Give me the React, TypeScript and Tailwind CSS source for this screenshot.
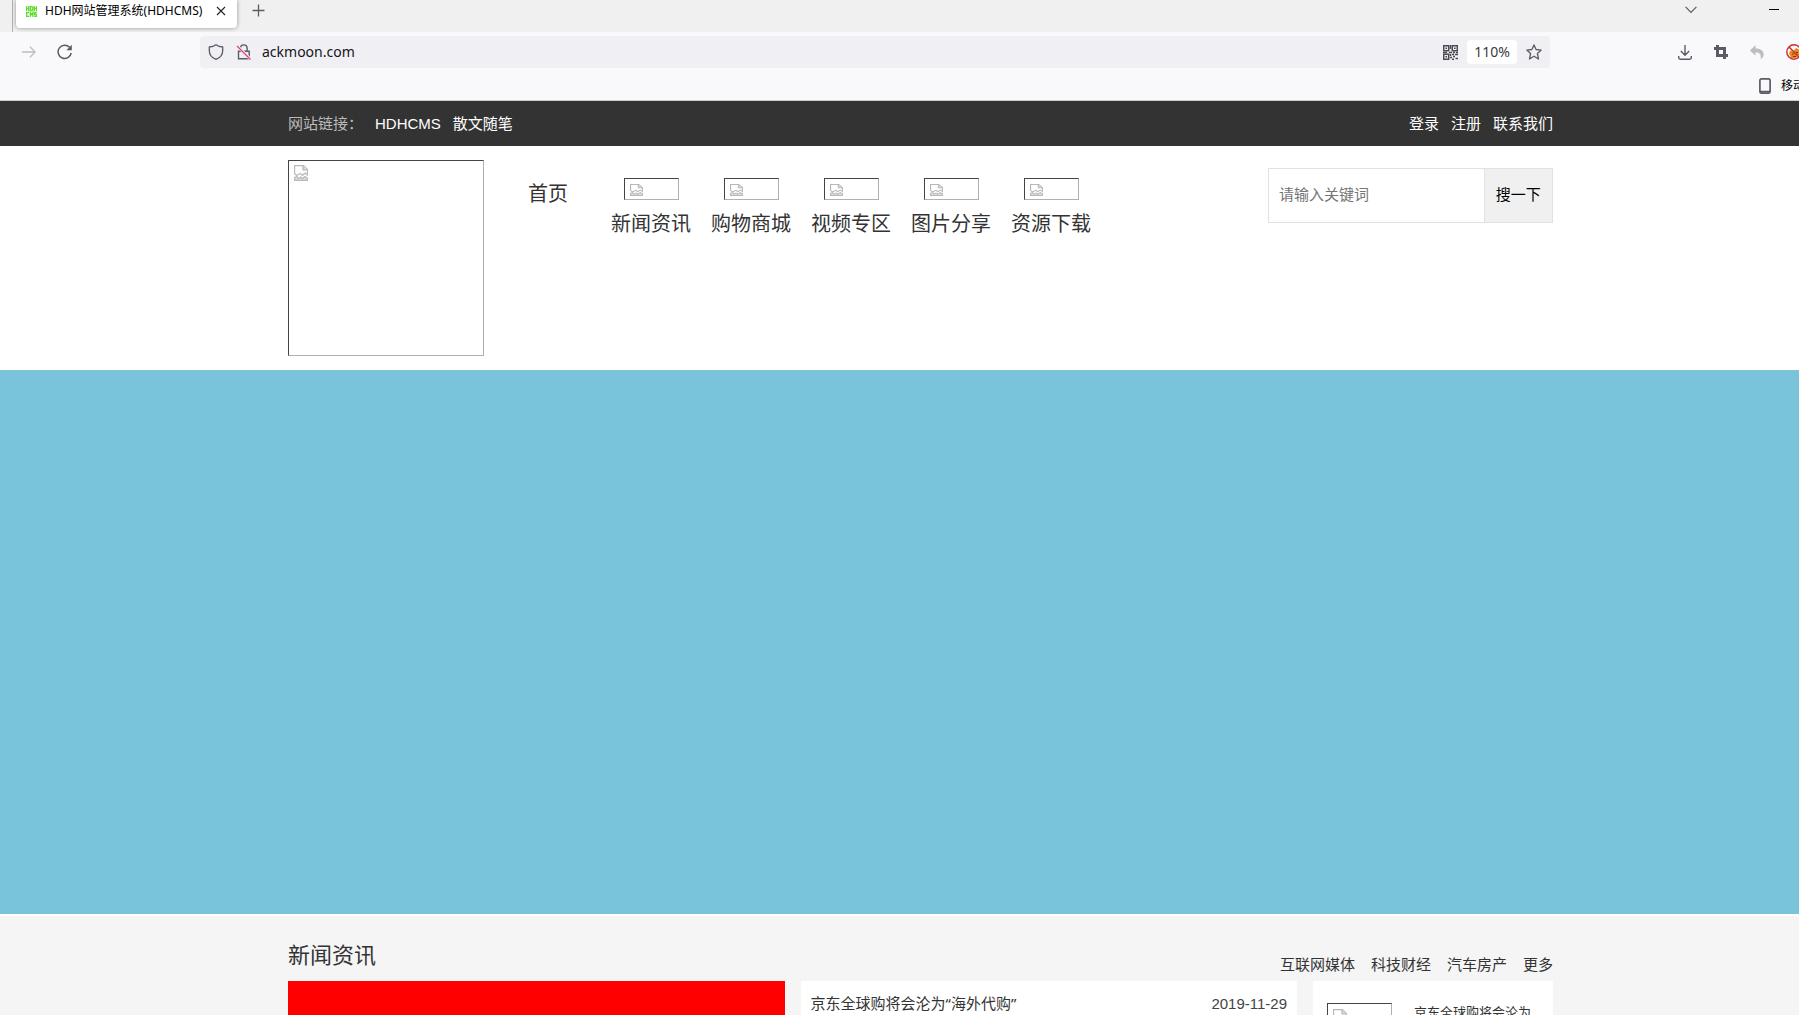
import React from "react";

const sans = "font-['Liberation_Sans','Noto_Sans_CJK_SC',sans-serif]";
const ui = "font-['Noto_Sans','Noto_Sans_CJK_SC',sans-serif]";

const links = ["新闻资讯", "购物商城", "视频专区", "图片分享", "资源下载"];
const categories = ["互联网媒体", "科技财经", "汽车房产", "更多"];

function BrokenImage({ box, icon }: { box: string; icon: string }) {
  return (
    <span
      role="img"
      aria-label="图片"
      className={`block shrink-0 border border-t-[#444] border-l-[#444] border-r-[#b0b0b0] border-b-[#b0b0b0] ${box}`}
    >
      <svg viewBox="0 0 14 16" preserveAspectRatio="none" className={icon} fill="none" stroke="#b9b9b9" strokeWidth="1.2">
        <path d="M2.5 10.5 .6 8.500V.6H9.500L13.400 4.500V10L11 8 8.500 10.500 6.500 8.500Z" fill="#fff" />
        <path d="M9 .6V5H13.400" fill="#d8d8d8" />
        <path d="M.6 15.400V12.500L3 11.500 4.500 13.500 6.500 12 8.500 13.500 11 11.500 13.400 13V15.400Z" fill="#ddd" />
      </svg>
    </span>
  );
}

function TabStrip() {
  return (
    <div className="flex h-8 items-start bg-[#f0f0f0] pl-3">
      <div className="h-8 w-px bg-[#b4b4b4]" />
      <div className="ml-[3px] flex h-7 w-[221px] items-center rounded-b bg-white pr-[11px] pb-1.5 pl-2.5 shadow-[0_0_4px_rgba(0,0,0,0.4)]">
        <svg viewBox="0 0 11 11" className="h-[11px] w-[11px] shrink-0" fill="none" stroke="#5fdc2a" strokeWidth="1.3">
          <path d="M.6 0V5M2.800 0V5M.6 2.500H2.800M4.500 .5V4.500H6L6.800 3.500V1.500L6 .5ZM8.300 0V5M10.500 0V5M8.300 2.500H10.500" />
          <path d="M3 6.500H.6V10.500H3M4.300 11V6.500L5.600 8.500 6.900 6.500V11M10.800 6.500H8.500V8.500H10.500V10.500H8.200" />
        </svg>
        <span className="ml-2 grow text-[12px] leading-5 whitespace-nowrap text-black">HDH网站管理系统(HDHCMS)</span>
        <button aria-label="关闭标签页" className="shrink-0">
          <svg viewBox="0 0 10 10" className="h-2.5 w-2.5" stroke="#222" strokeWidth="1.1"><path d="M1 1 9 9M9 1 1 9" /></svg>
        </button>
      </div>
      <button aria-label="新建标签页" className="mt-1 ml-[15px]">
        <svg viewBox="0 0 13 13" className="h-[13px] w-[13px]" stroke="#5b5b66" strokeWidth="1.3"><path d="M6.500 .5V12.500M.5 6.500H12.500" /></svg>
      </button>
      <button aria-label="列出标签页" className="mt-1.5 mr-[72px] ml-auto">
        <svg viewBox="0 0 12 8" className="h-2 w-3" fill="none" stroke="#5b5b66" strokeWidth="1.2"><path d="M.6 .8 6 6.500 11.400 .8" /></svg>
      </button>
      <button aria-label="最小化" className="mt-[9px] mr-[62px] h-px w-2.5 bg-black" />
    </div>
  );
}

function Toolbar() {
  return (
    <div className="h-[69px] border-b border-[#ccc] bg-[#f9f9fb] pt-1 text-[#5b5b66]">
      <div className="flex h-8 items-center pl-[22px]">
        <button aria-label="前进">
          <svg viewBox="0 0 14 12" className="h-3 w-3.5" fill="none" stroke="#bcbcc2" strokeWidth="1.3"><path d="M0 6H13M8 .8 13.200 6 8 11.200" /></svg>
        </button>
        <button aria-label="刷新" className="ml-[21px]">
          <svg viewBox="0 0 16 16" className="h-4 w-4" fill="none" stroke="currentColor" strokeWidth="1.5">
            <path d="M14.200 9A6.600 6.600 0 1 1 12.500 3.300" />
            <path d="M14.800 .8V6.200H9.400Z" fill="currentColor" stroke="none" />
          </svg>
        </button>
        <div className="ml-[127px] flex h-8 grow items-center rounded bg-[#f0f0f4] pr-2 pl-2">
          <svg viewBox="0 0 16 16" className="h-4 w-4 shrink-0" fill="none" stroke="currentColor" strokeWidth="1.3">
            <path d="M8 .8C6 2.200 3.800 2.900 1.300 3V6.500C1.300 10.800 3.800 13.800 8 15.300 12.200 13.800 14.700 10.800 14.700 6.500V3C12.200 2.900 10 2.200 8 .8Z" />
          </svg>
          <svg viewBox="0 0 16 16" className="ml-3 h-4 w-4 shrink-0" fill="none" stroke="currentColor" strokeWidth="1.4">
            <path d="M4.500 7V4.200A3.300 3.300 0 0 1 11.100 4.200V7M2.500 7.200H13.200V14.700H2.500Z" />
            <path d="M.8 1.500 14.800 15.500" stroke="#f0f0f4" strokeWidth="3" />
            <path d="M1 2 14.500 15.500" stroke="#e8416a" strokeWidth="1.3" />
          </svg>
          <input aria-label="网址" defaultValue="ackmoon.com" className="ml-2.5 min-w-0 grow bg-transparent pb-0.5 text-[14px] text-[#15141a] outline-none" />
          <svg viewBox="0 0 15 15" className="h-[15px] w-[15px] shrink-0" fill="none" stroke="#4a4a52" strokeWidth="1.5">
            <path d="M.7 .7H5.700V5.700H.7ZM9.300 .7H14.300V5.700H9.300ZM.7 9.300H5.700V14.300H.7Z" />
            <path d="M2.400 3.200H4M11 3.200H12.600M2.400 11.800H4M7.500 0V4M0 7.500H4M6 7.500H9M10 7.500H12M13 7.500H15M7.500 9V11M9 9.500H11M12 9.500H15M7 12.500H9M10 11.500H12M9 14.300H11M12.500 13.500H15" />
          </svg>
          <button className="ml-[9px] h-6 w-[50px] rounded bg-white pb-0.5 text-[14px] text-[#3a3a44]">110%</button>
          <button aria-label="收藏" className="ml-[9px]">
            <svg viewBox="0 0 16 16" className="h-4 w-4" fill="none" stroke="currentColor" strokeWidth="1.3" strokeLinejoin="round">
              <path d="M8 .9 10.100 5.500 15.200 6.100 11.400 9.500 12.500 15 8 12.200 3.500 15 4.600 9.500 .8 6.100 5.900 5.500Z" />
            </svg>
          </button>
        </div>
        <div className="ml-32 flex w-[163px] shrink-0 items-center gap-[22px]">
          <button aria-label="下载">
            <svg viewBox="0 0 14 15" className="h-[15px] w-3.5" fill="none" stroke="currentColor" strokeWidth="1.4"><path d="M7 0V10M2.800 6 7 10.200 11.200 6M.7 11V12.500Q.7 14.200 2.400 14.200H11.600Q13.300 14.200 13.300 12.500V11" /></svg>
          </button>
          <button aria-label="截图">
            <svg viewBox="0 0 14 14" className="h-3.5 w-3.5" fill="none" stroke="currentColor" strokeWidth="3"><path d="M3.500 0V10.500H14M0 3.500H10.500V14" /></svg>
          </button>
          <button aria-label="撤销">
            <svg viewBox="0 0 14 14" className="h-3.5 w-3.5" fill="#bcbcc2"><path d="M5.500 0V3.500C11 3.500 13.700 6 13.700 9.500 13.700 11.500 12.500 13 10.500 14 11.500 10 10 7.500 5.500 7.300V10.800L0 5.400Z" /></svg>
          </button>
          <button aria-label="扩展">
            <svg viewBox="0 0 16 16" className="h-4 w-4" fill="none">
              <path d="M3 9 4.500 6.500 7 7.500 10 4 13 5.500V11L10 14H5Z" fill="#e8891c" />
              <path d="M6 10H8M10 8.500H12M7 12.500H10" stroke="#7a3c10" />
              <circle cx="8" cy="8" r="7.200" stroke="#cc2b2b" strokeWidth="1.400" />
              <path d="M3 3 13 13" stroke="#cc2b2b" strokeWidth="1.400" />
            </svg>
          </button>
        </div>
      </div>
      <div className="flex h-8 items-center justify-end pt-1 pr-9">
        <button className="flex items-center gap-2.5 text-[12px] whitespace-nowrap text-black">
          <svg viewBox="0 0 12 16" className="h-4 w-3" fill="none" stroke="#5b5b66" strokeWidth="1.700"><rect x=".9" y=".9" width="10.200" height="14.200" rx="1.500" /><path d="M1 13.700H11M5 13.700H7" /></svg>
          移动
        </button>
      </div>
    </div>
  );
}

function SiteBar() {
  return (
    <div className="bg-[#333] text-[15px] leading-[45px] text-white">
      <div className="mx-auto flex max-w-[1265px] justify-between">
        <div className="flex gap-3">
          <span className="whitespace-nowrap text-[#bbb]">网站链接：</span>
          <a href="#">HDHCMS</a>
          <a href="#">散文随笔</a>
        </div>
        <nav className="flex gap-3">
          <a href="#">登录</a>
          <a href="#">注册</a>
          <a href="#">联系我们</a>
        </nav>
      </div>
    </div>
  );
}

function Header() {
  return (
    <header className="mx-auto flex w-full max-w-[1265px] items-start pt-3.5 pb-3.5">
      <a href="#" aria-label="首页"><BrokenImage box="h-[196px] w-[196px] pl-[5px] pt-1" icon="h-4 w-3.5" /></a>
      <nav className="ml-11 flex items-start text-[20px] leading-8 text-[#333]">
        <a href="#" className="mt-[18px]">首页</a>
        <div className="ml-[43px] flex gap-5 pt-[18px]">
          {links.map((name) => (
            <a key={name} href="#" className="flex flex-col items-center gap-2">
              <BrokenImage box="h-[22px] w-[55px] pl-[5px] pt-[5px]" icon="h-3 w-[13px]" />
              <span>{name}</span>
            </a>
          ))}
        </div>
      </nav>
      <form className="mt-2 ml-auto flex h-[55px] w-[285px] border border-[#e2e2e2] text-[15px]" onSubmit={(e) => e.preventDefault()}>
        <input aria-label="关键词" placeholder="请输入关键词" className="min-w-0 grow px-2.5 outline-none placeholder:text-[#757575]" />
        <button className="w-[70px] border-l border-[#e2e2e2] bg-[#f0f0f0] text-black">搜一下</button>
      </form>
    </header>
  );
}

function News() {
  return (
    <main className="mt-0.5 grow bg-[#f5f5f5] text-[15px] text-[#333]">
      <div className="mx-auto max-w-[1265px] pt-5">
        <div className="flex items-start justify-between">
          <h2 className="text-[22px] leading-10">新闻资讯</h2>
          <nav className="mt-4 flex gap-4 pb-1 leading-[25px]">
            {categories.map((name) => (
              <a key={name} href="#">{name}</a>
            ))}
          </nav>
        </div>
        <div className="flex gap-4">
          <div className="h-80 w-0 grow bg-[#f00]" />
          <div className="h-80 w-0 grow bg-white">
            <div className="flex justify-between px-2.5 leading-[45px]">
              <a href="#">京东全球购将会沦为<span className={ui}>“</span>海外代购<span className={ui}>”</span></a>
              <time className="text-[#444]">2019-11-29</time>
            </div>
          </div>
          <a href="#" className="flex h-80 w-60 items-start bg-white px-3.5 pt-[22px]">
            <BrokenImage box="h-12 w-[65px] pl-[5px] pt-[5px]" icon="h-4 w-3.5" />
            <span className="ml-[22px] text-[13px] leading-5">京东全球购将会沦为</span>
          </a>
        </div>
      </div>
    </main>
  );
}

export default function App() {
  return (
    <div className={`h-screen overflow-hidden bg-white ${sans}`}>
      <div className="-mr-[42px] flex h-full flex-col">
        <div className={`shrink-0 ${ui}`}>
          <TabStrip />
          <Toolbar />
        </div>
        <SiteBar />
        <Header />
        <div className="h-[544px] shrink-0 bg-[#79c4db]" />
        <News />
      </div>
    </div>
  );
}
